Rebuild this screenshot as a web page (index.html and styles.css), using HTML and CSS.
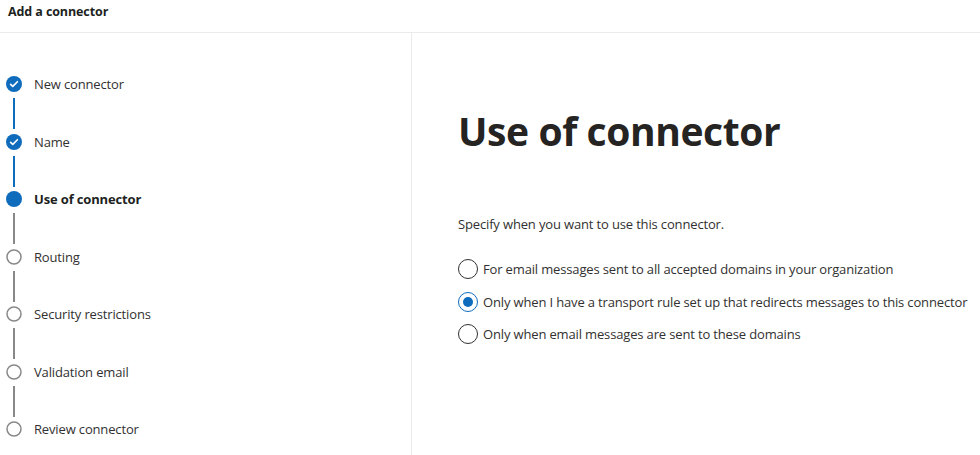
FILE: index.html
```html
<!DOCTYPE html>
<html lang="en">
<head>
<meta charset="utf-8">
<title>Add a connector</title>
<link rel="stylesheet" href="styles.css">
</head>
<body>
<header class="topbar"><h1 class="title">Add a connector</h1></header>
<div class="main">
  <nav class="steps">
    <div class="step done">
      <div class="marker"><span class="dot"><svg viewBox="0 0 16 16" width="16" height="16"><circle cx="8" cy="8" r="8" fill="#0f6cbd"/><path d="M4.6 8.3l2.2 2.1 4.6-4.7" fill="none" stroke="#fff" stroke-width="1.6" stroke-linecap="round" stroke-linejoin="round"/></svg></span><span class="line blue"></span></div>
      <span class="label">New connector</span>
    </div>
    <div class="step done">
      <div class="marker"><span class="dot"><svg viewBox="0 0 16 16" width="16" height="16"><circle cx="8" cy="8" r="8" fill="#0f6cbd"/><path d="M4.6 8.3l2.2 2.1 4.6-4.7" fill="none" stroke="#fff" stroke-width="1.6" stroke-linecap="round" stroke-linejoin="round"/></svg></span><span class="line blue"></span></div>
      <span class="label">Name</span>
    </div>
    <div class="step current">
      <div class="marker"><span class="dot"><svg viewBox="0 0 16 16" width="16" height="16"><circle cx="8" cy="8" r="8" fill="#0f6cbd"/></svg></span><span class="line"></span></div>
      <span class="label">Use of connector</span>
    </div>
    <div class="step">
      <div class="marker"><span class="dot"><svg viewBox="0 0 16 16" width="16" height="16"><circle cx="8" cy="8" r="7" fill="#fff" stroke="#8a8886" stroke-width="1.5"/></svg></span><span class="line"></span></div>
      <span class="label">Routing</span>
    </div>
    <div class="step">
      <div class="marker"><span class="dot"><svg viewBox="0 0 16 16" width="16" height="16"><circle cx="8" cy="8" r="7" fill="#fff" stroke="#8a8886" stroke-width="1.5"/></svg></span><span class="line"></span></div>
      <span class="label">Security restrictions</span>
    </div>
    <div class="step">
      <div class="marker"><span class="dot"><svg viewBox="0 0 16 16" width="16" height="16"><circle cx="8" cy="8" r="7" fill="#fff" stroke="#8a8886" stroke-width="1.5"/></svg></span><span class="line"></span></div>
      <span class="label">Validation email</span>
    </div>
    <div class="step last">
      <div class="marker"><span class="dot"><svg viewBox="0 0 16 16" width="16" height="16"><circle cx="8" cy="8" r="7" fill="#fff" stroke="#8a8886" stroke-width="1.5"/></svg></span></div>
      <span class="label">Review connector</span>
    </div>
  </nav>
  <section class="content">
    <h2 class="heading">Use of connector</h2>
    <p class="desc">Specify when you want to use this connector.</p>
    <div class="options">
      <label class="option"><span class="radio"></span><span class="opt-text">For email messages sent to all accepted domains in your organization</span></label>
      <label class="option"><span class="radio checked"></span><span class="opt-text">Only when I have a transport rule set up that redirects messages to this connector</span></label>
      <label class="option"><span class="radio"></span><span class="opt-text">Only when email messages are sent to these domains</span></label>
    </div>
  </section>
</div>
</body>
</html>
```
FILE: styles.css
```css
* { box-sizing: border-box; }
html, body { margin: 0; padding: 0; background: #fff; }
body {
  font-family: "Open Sans", "Noto Sans", sans-serif;
  color: #323130;
  width: 980px;
  height: 455px;
  overflow: hidden;
}
.topbar {
  height: 33px;
  border-bottom: 1px solid #edebe9;
  padding: 3px 0 0 8px;
}
.title {
  margin: 0;
  font-size: 12.5px;
  font-weight: 700;
  color: #201f1e;
  letter-spacing: -0.1px;
}
.main {
  display: flex;
  height: 422px;
}
.steps {
  width: 412px;
  border-right: 1px solid #edebe9;
  padding: 43px 0 0 6px;
  display: flex;
  flex-direction: column;
  overflow: hidden;
}
.step {
  display: flex;
  align-items: flex-start;
  height: 57.5px;
  flex: none;
}
.marker {
  width: 16px;
  display: flex;
  flex-direction: column;
  align-items: center;
}
.dot { display: block; width: 16px; height: 16px; }
.dot svg { display: block; }
.line {
  width: 2px;
  height: 31px;
  margin-top: 6px;
  background: #8a8886;
}
.line.blue { background: #0f6cbd; }
.label {
  margin-left: 12px;
  font-size: 13px;
  line-height: 16px;
  color: #323130;
  letter-spacing: -0.15px;
}
.current .label { font-weight: 700; color: #201f1e; }
.content {
  flex: 1;
  padding: 72px 0 0 46px;
}
.heading {
  margin: 0;
  font-size: 39px;
  font-weight: 700;
  color: #252423;
  letter-spacing: -0.4px;
  line-height: 52px;
}
.desc {
  margin: 58px 0 0;
  font-size: 13px;
  line-height: 18px;
  color: #323130;
  letter-spacing: -0.15px;
}
.options {
  margin-top: 26px;
  display: flex;
  flex-direction: column;
  gap: 12.5px;
}
.option {
  display: flex;
  align-items: center;
  height: 20px;
}
.radio {
  width: 20px;
  height: 20px;
  border: 1px solid #323130;
  border-radius: 50%;
  display: flex;
  align-items: center;
  justify-content: center;
  flex: none;
}
.radio.checked { border-color: #0f6cbd; }
.radio.checked::after {
  content: "";
  width: 10px;
  height: 10px;
  border-radius: 50%;
  background: #0f6cbd;
}
.opt-text {
  margin-left: 5px;
  font-size: 13px;
  color: #323130;
  letter-spacing: -0.15px;
}
```
